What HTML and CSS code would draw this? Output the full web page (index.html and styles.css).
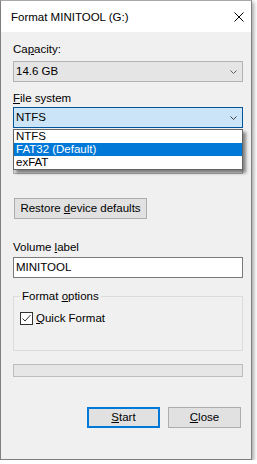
FILE: index.html
```html
<!DOCTYPE html>
<html lang="en">
<head>
<meta charset="utf-8">
<title>Format MINITOOL (G:)</title>
<link rel="stylesheet" href="styles.css">
</head>
<body>
<div class="window">
  <div class="titlebar">
    <span class="title">Format MINITOOL (G:)</span>
    <svg class="close-icon" width="10" height="10" viewBox="0 0 10 10"><path d="M0.5 0.5 L9.5 9.5 M9.5 0.5 L0.5 9.5" stroke="#000" stroke-width="1" fill="none"/></svg>
  </div>
  <div class="content">
    <div class="label label-capacity">Ca<u>p</u>acity:</div>
    <div class="combo combo-capacity">
      <span>14.6 GB</span>
      <svg class="chevron" width="7" height="4" viewBox="0 0 7 4"><path d="M0.5 0.5 L3.5 3.5 L6.5 0.5" stroke="#606060" fill="none"/></svg>
    </div>
    <div class="label label-fs"><u>F</u>ile system</div>
    <div class="combo-wrap">
      <div class="combo combo-open">
        <span>NTFS</span>
        <svg class="chevron" width="7" height="4" viewBox="0 0 7 4"><path d="M0.5 0.5 L3.5 3.5 L6.5 0.5" stroke="#404040" fill="none"/></svg>
      </div>
      <ul class="dropdown">
        <li class="option">NTFS</li>
        <li class="option option-selected">FAT32 (Default)</li>
        <li class="option">exFAT</li>
      </ul>
    </div>
    <div class="label label-alloc"></div>
    <div class="combo combo-alloc"></div>
    <button class="btn btn-restore">Restore <u>d</u>evice defaults</button>
    <div class="label label-volume">Volume <u>l</u>abel</div>
    <div class="textbox">MINITOOL</div>
    <fieldset class="group">
      <legend class="group-legend">Format <u>o</u>ptions</legend>
      <div class="check-row">
        <span class="checkbox">
          <svg width="11" height="11" viewBox="0 0 11 11"><path d="M1.5 5.5 L4 8 L9.5 2" stroke="#333" stroke-width="1" fill="none"/></svg>
        </span>
        <span class="check-label"><u>Q</u>uick Format</span>
      </div>
    </fieldset>
    <div class="progress"></div>
    <div class="buttons">
      <button class="btn btn-action btn-default"><u>S</u>tart</button>
      <button class="btn btn-action"><u>C</u>lose</button>
    </div>
  </div>
</div>
</body>
</html>
```
FILE: styles.css
```css
* {
  box-sizing: border-box;
}

html, body {
  margin: 0;
  padding: 0;
  background: #ffffff;
}

body {
  font-family: "Liberation Sans", Arial, sans-serif;
  font-size: 11.5px;
  color: #000;
}

.window {
  width: 252px;
  height: 460px;
  border: 1px solid #7f7f7f;
  border-top-color: #aaaaaa;
  background: #f0f0f0;
  box-shadow: 2px 2px 4px rgba(0, 0, 0, 0.35);
  display: flex;
  flex-direction: column;
}

.titlebar {
  height: 31px;
  background: #ffffff;
  display: flex;
  align-items: center;
  justify-content: space-between;
  padding: 0 7px 0 10px;
  flex-shrink: 0;
}

.title {
  font-size: 11.5px;
  line-height: 13px;
  padding-top: 1px;
}

.close-icon {
  display: block;
  margin-top: 1px;
}

.content {
  padding: 0 8px 0 12px;
  display: flex;
  flex-direction: column;
}

u {
  text-decoration: underline;
  text-underline-offset: 1px;
}

.label {
  height: 13px;
  line-height: 13px;
  white-space: nowrap;
}

.label-capacity {
  margin-top: 11px;
}

.label-fs {
  margin-top: 10px;
}

.label-alloc {
  margin-top: 9px;
}

.label-volume {
  margin-top: 22px;
}

.combo {
  height: 21px;
  border: 1px solid #adadad;
  background: #e1e1e1;
  display: flex;
  align-items: center;
  justify-content: space-between;
  padding: 0 5px 0 2px;
  line-height: 13px;
}

.combo-capacity {
  margin-top: 5px;
  background: #e5e5e5;
  border-color: #b3b3b3;
}

.combo-wrap {
  position: relative;
  margin-top: 2px;
}

.combo-open {
  background: #cce4f7;
  border-color: #005499;
}

.combo-alloc {
  margin-top: 3px;
}

.chevron {
  display: block;
}

.dropdown {
  position: absolute;
  left: 0;
  right: 0;
  top: 100%;
  margin: 1px 0 0;
  padding: 0;
  list-style: none;
  background: #ffffff;
  border: 1px solid #646464;
  box-shadow: 3px 3px 3px rgba(0, 0, 0, 0.45);
  z-index: 2;
}

.option {
  height: 13px;
  line-height: 13px;
  padding-left: 2px;
  white-space: nowrap;
}

.option-selected {
  background: #0078d7;
  color: #ffffff;
}

.btn {
  font-family: inherit;
  font-size: 11.5px;
  color: #000;
  background: #e1e1e1;
  border: 1px solid #adadad;
  border-radius: 0;
  height: 21px;
  padding: 0;
  line-height: 13px;
  text-align: center;
  white-space: nowrap;
}

.btn-restore {
  margin-top: 24px;
  margin-left: 1px;
  width: 133px;
  align-self: flex-start;
}

.textbox {
  margin-top: 3px;
  height: 21px;
  border: 1px solid #7a7a7a;
  background: #ffffff;
  padding: 0 2px;
  display: flex;
  align-items: center;
  line-height: 13px;
}

.group {
  margin: 12px 0 0;
  min-width: 0;
  border: 1px solid #dcdcdc;
  padding: 9px 6px 25px 6px;
}

.group-legend {
  padding: 0 2px;
  line-height: 13px;
  height: 13px;
}

.check-row {
  display: flex;
  align-items: center;
  gap: 3px;
}

.checkbox {
  width: 13px;
  height: 13px;
  border: 1px solid #333333;
  background: #ffffff;
  display: flex;
  align-items: center;
  justify-content: center;
  flex-shrink: 0;
}

.checkbox svg {
  display: block;
}

.check-label {
  line-height: 13px;
}

.progress {
  margin-top: 13px;
  height: 13px;
  border: 1px solid #bcbcbc;
  background: #e6e6e6;
}

.buttons {
  margin-top: 30px;
  display: flex;
  justify-content: flex-end;
  gap: 8px;
  padding-right: 2px;
}

.btn-action {
  width: 73px;
}

.btn-default {
  border: 2px solid #0078d7;
}
```
